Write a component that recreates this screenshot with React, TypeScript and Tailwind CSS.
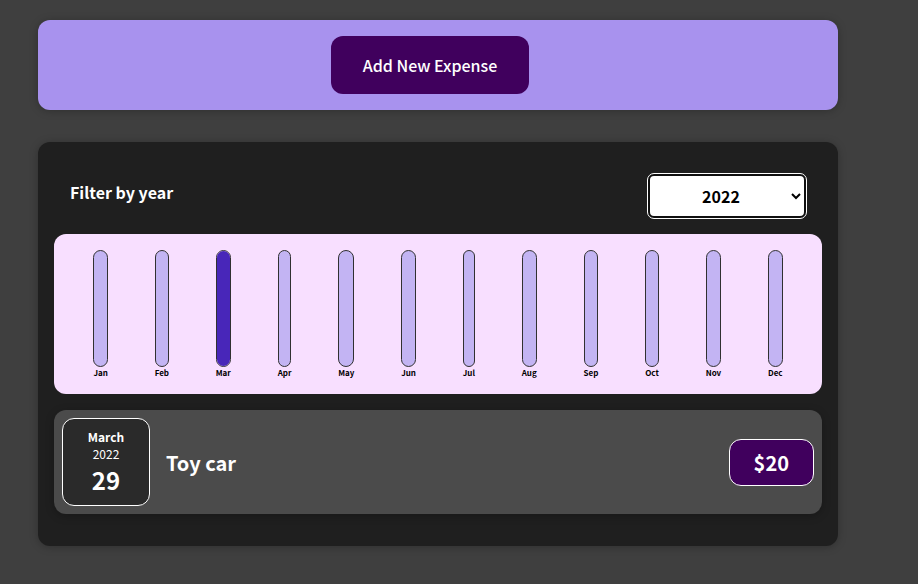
import { useState } from "react";

type Expense = { id: string; title: string; amount: number; date: Date };

const MONTHS = ["Jan", "Feb", "Mar", "Apr", "May", "Jun", "Jul", "Aug", "Sep", "Oct", "Nov", "Dec"];

const EXPENSES: Expense[] = [
  { id: "e1", title: "Toy car", amount: 20, date: new Date(2022, 2, 29) },
];

function NewExpense() {
  return (
    <section className="flex justify-center rounded-xl bg-[#a892ee] py-4 pr-8 pl-4 shadow-[0_1px_8px_rgba(0,0,0,0.25)]">
      <button
        type="button"
        className="cursor-pointer rounded-xl bg-[#40005d] px-8 py-4 text-base leading-[26px] font-medium text-white"
      >
        Add New Expense
      </button>
    </section>
  );
}

function YearFilter({ year, onChange }: { year: string; onChange: (year: string) => void }) {
  return (
    <div className="flex items-start justify-between px-4 pt-4 pb-4">
      <label htmlFor="year" className="text-base leading-9 font-bold text-white">
        Filter by year
      </label>
      <select
        id="year"
        value={year}
        onChange={(event) => onChange(event.target.value)}
        className="h-11 w-[158px] rounded-md border-2 border-[#101010] bg-white px-2 text-center text-base font-bold text-black outline-1 outline-white"
      >
        <option value="2022">2022</option>
        <option value="2021">2021</option>
        <option value="2020">2020</option>
        <option value="2019">2019</option>
      </select>
    </div>
  );
}

function Chart({ expenses }: { expenses: Expense[] }) {
  const totals = MONTHS.map((_, month) =>
    expenses.filter((e) => e.date.getMonth() === month).reduce((sum, e) => sum + e.amount, 0),
  );
  const max = Math.max(...totals);
  return (
    <div className="flex h-40 justify-around rounded-xl bg-[#f8dfff] p-4">
      {MONTHS.map((label, month) => (
        <div key={label} className="flex flex-col items-center">
          <div className="flex w-full flex-1 flex-col justify-end overflow-hidden rounded-xl border border-[#313131] bg-[#c3b4f3]">
            <div
              className="w-full bg-[#4826b9]"
              style={{ height: max > 0 ? `${(totals[month] / max) * 100}%` : "0%" }}
            />
          </div>
          <div className="text-[8px] leading-[11px] font-bold text-black">{label}</div>
        </div>
      ))}
    </div>
  );
}

function ExpenseItem({ expense }: { expense: Expense }) {
  return (
    <li className="flex items-center gap-4 rounded-xl bg-[#4b4b4b] p-2 text-white shadow-[0_2px_8px_rgba(0,0,0,0.25)]">
      <time
        dateTime="2022-03-29"
        className="flex size-22 flex-col items-center justify-center rounded-xl border border-white bg-[#2a2a2a] pt-0.5"
      >
        <span className="text-xs leading-[18px] font-bold">
          {expense.date.toLocaleString("en-US", { month: "long" })}
        </span>
        <span className="text-xs leading-4">{expense.date.getFullYear()}</span>
        <span className="text-2xl leading-9 font-bold">{expense.date.getDate()}</span>
      </time>
      <h2 className="flex-1 text-xl leading-[29px] font-bold">{expense.title}</h2>
      <div className="rounded-xl border border-white bg-[#40005d] px-6 py-2 text-xl leading-[29px] font-bold">
        ${expense.amount}
      </div>
    </li>
  );
}

export default function App() {
  const [year, setYear] = useState("2022");
  const shown = EXPENSES.filter((e) => String(e.date.getFullYear()) === year);
  return (
    <div className="min-h-screen bg-[#3f3f3f] py-5 pr-20 pl-[38px] font-['Noto_Sans_CJK_JP',sans-serif]">
      <main className="flex w-full max-w-[800px] flex-col gap-8">
        <NewExpense />
        <section className="rounded-xl bg-[#1f1f1f] p-4 shadow-[0_1px_8px_rgba(0,0,0,0.25)]">
          <YearFilter year={year} onChange={setYear} />
          <Chart expenses={shown} />
          <ul className="my-4 flex flex-col gap-4">
            {shown.map((expense) => (
              <ExpenseItem key={expense.id} expense={expense} />
            ))}
          </ul>
        </section>
      </main>
    </div>
  );
}
